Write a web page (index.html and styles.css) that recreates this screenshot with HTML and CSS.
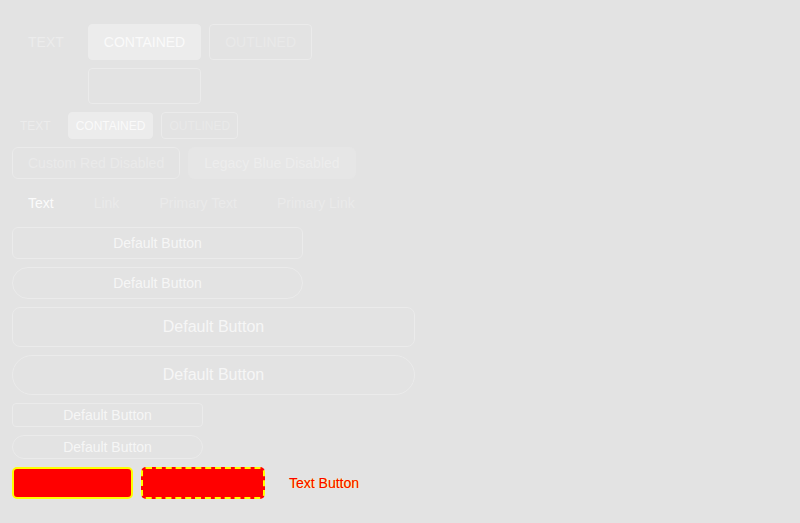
FILE: index.html
```html
<!DOCTYPE html>
<html>
<head>
<meta charset="utf-8">
<link rel="stylesheet" href="styles.css">
</head>
<body>
<div class="page">
  <div class="row first">
    <button class="mbtn mtext">TEXT</button>
    <button class="mbtn mcontained">CONTAINED</button>
    <button class="mbtn moutlined">OUTLINED</button>
  </div>
  <div class="row">
    <span class="spacer"></span>
    <button class="mbtn moutlined empty"></button>
  </div>
  <div class="row small">
    <button class="mbtn mtext sm">TEXT</button>
    <button class="mbtn mcontained sm">CONTAINED</button>
    <button class="mbtn moutlined sm">OUTLINED</button>
  </div>
  <div class="row">
    <button class="abtn bordered">Custom Red Disabled</button>
    <button class="abtn filled">Legacy Blue Disabled</button>
  </div>
  <div class="row">
    <button class="abtn plain white">Text</button>
    <button class="abtn plain">Link</button>
    <button class="abtn plain">Primary Text</button>
    <button class="abtn plain">Primary Link</button>
  </div>
  <button class="abtn bordered block w291">Default Button</button>
  <button class="abtn bordered block w291 round">Default Button</button>
  <button class="abtn bordered block lg w403">Default Button</button>
  <button class="abtn bordered block lg w403 round">Default Button</button>
  <button class="abtn bordered block smh w191">Default Button</button>
  <button class="abtn bordered block smh w191 round">Default Button</button>
  <div class="row">
    <button class="abtn danger">Default Button</button>
    <button class="abtn danger dashed">Danger Button</button>
    <button class="abtn plain redtext">Text Button</button>
  </div>
</div>
</body>
</html>
```
FILE: styles.css
```css
* { box-sizing: border-box; }
html, body { margin: 0; padding: 0; }
body {
  background: #e3e3e3;
  font-family: "Liberation Sans", Arial, sans-serif;
  width: 800px;
  height: 523px;
  overflow: hidden;
}
button { font-family: inherit; margin: 0; cursor: default; }
.page {
  padding: 12px;
  display: flex;
  flex-direction: column;
  align-items: flex-start;
  gap: 8px;
}
.row { display: flex; gap: 8px; align-items: center; }
.row.first { margin-top: 12px; }
.spacer { width: 68px; }

.mbtn {
  height: 36px;
  padding: 0 15px;
  font-size: 14px;
  border-radius: 4px;
  border: 1px solid transparent;
  background: transparent;
  color: #ececec;
  line-height: 1;
}
.mcontained { background: #ececec; border-color: #ececec; color: #fafafa; }
.moutlined { border-color: #ebebeb; color: #e9e9e9; }
.empty { width: 113px; height: 36px; }
.sm { height: 27px; font-size: 12px; padding: 0 7px; }
.row.small { gap: 9px; }
.row.small .mcontained.sm { margin-right: -1px; }

.abtn {
  height: 32px;
  padding: 0 15px;
  font-size: 14px;
  border-radius: 6px;
  border: 1px solid transparent;
  background: transparent;
  color: #eaeaea;
  line-height: 1;
}
.bordered { border-color: #ebebeb; }
.filled { background: #e6e6e6; border-color: #e6e6e6; color: #ededed; }
.plain.white { color: #fbfbfb; }
.block { text-align: center; color: #f6f6f6; }
.w291 { width: 291px; }
.w403 { width: 403px; }
.w191 { width: 191px; }
.lg { height: 40px; font-size: 16px; border-radius: 8px; }
.smh { height: 24px; border-radius: 4px; }
.round { border-radius: 999px; }

.danger {
  background: #ff0000;
  border: 2px solid #ffff00;
  color: #ff0000;
  padding: 0 14px;
  border-radius: 5px;
}
.danger.dashed { border-style: dashed; padding: 0 15px; }
.redtext {
  color: #ff0000;
  text-shadow: 0.4px 0.4px 0 #ffff00;
}
```
